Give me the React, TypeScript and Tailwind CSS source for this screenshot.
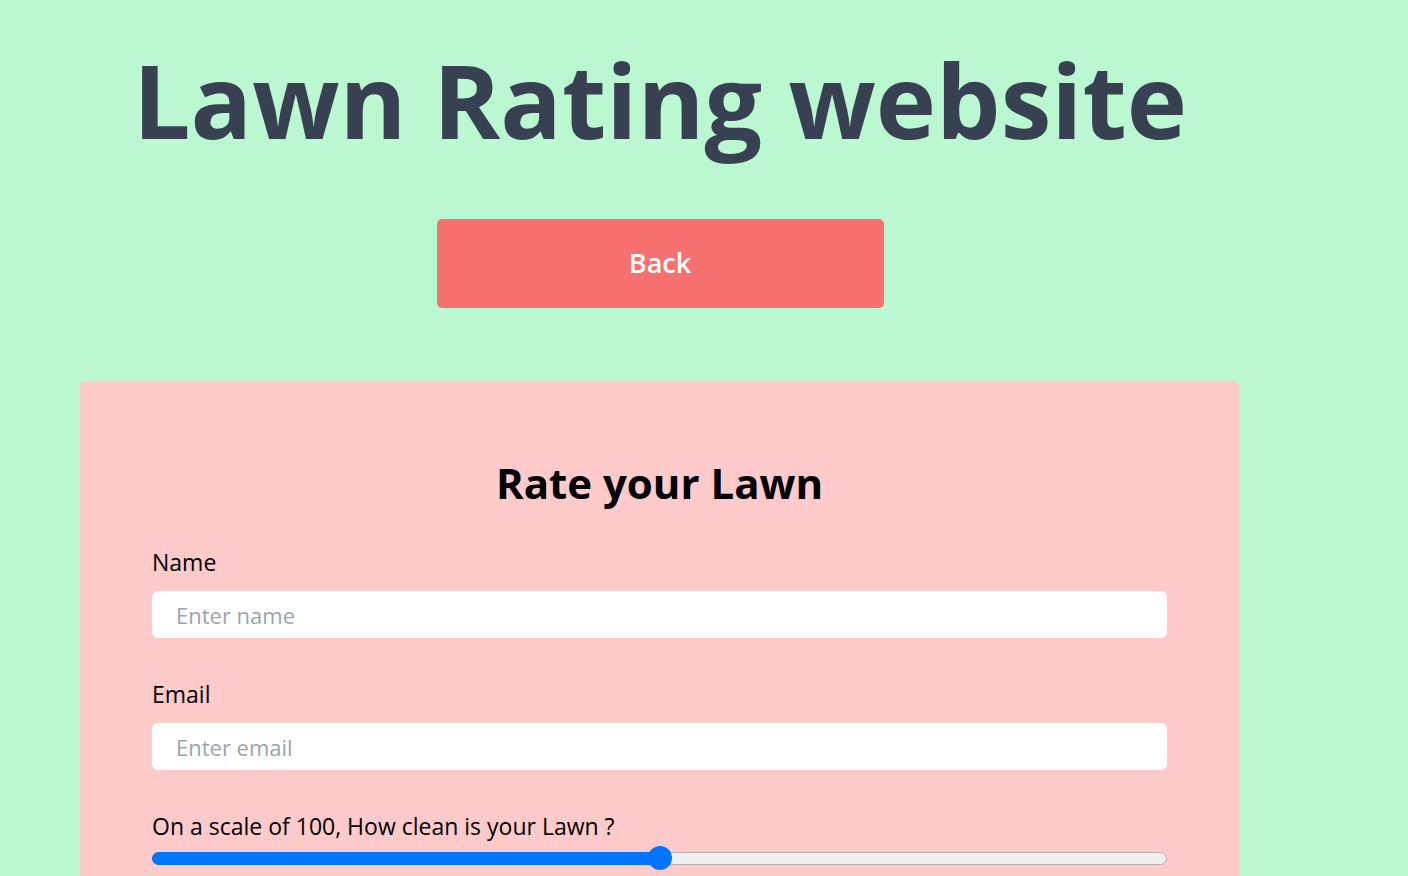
import { useState } from "react";

const font = { fontFamily: "'Open Sans', 'Noto Sans', sans-serif" };

function Field({ label, placeholder, type }: { label: string; placeholder: string; type: string }) {
  return (
    <div className="flex flex-col">
      <label className="text-[23px] leading-[36px] text-black">{label}</label>
      <input
        type={type}
        placeholder={placeholder}
        className="mt-[11px] h-[47px] w-full rounded-[6px] bg-white px-[24px] text-[22px] text-[#374151] outline-none placeholder:text-[#9ca3af]"
      />
    </div>
  );
}

export default function App() {
  const [score, setScore] = useState(50);

  return (
    <div className="min-h-screen w-full overflow-hidden bg-[#bbf7d0]" style={font}>
      <div className="flex w-[1320px] flex-col items-center">
        <h1 className="mt-[40px] text-[102px] font-bold leading-[120px] text-[#374151]">
          Lawn Rating website
        </h1>

        <button className="mt-[59px] h-[89px] w-[447px] rounded-[5px] bg-[#f87171] text-[27px] font-semibold text-white">
          Back
        </button>

        <div className="mt-[73px] ml-[80px] w-[1159px] self-start rounded-[5px] bg-[#fecaca] px-[72px] pt-[72px] pb-[60px]">
          <h2 className="text-center text-[42px] font-bold leading-[60px] text-black">Rate your Lawn</h2>

          <div className="mt-[31px] flex flex-col gap-[38px]">
            <Field label="Name" placeholder="Enter name" type="text" />
            <Field label="Email" placeholder="Enter email" type="email" />

            <div className="flex flex-col">
              <label className="text-[23px] leading-[36px] text-black">
                On a scale of 100, How clean is your Lawn ?
              </label>
              <div
                className="relative mt-[2px] h-[24px] w-full cursor-pointer"
                onClick={(e) => {
                  const r = e.currentTarget.getBoundingClientRect();
                  setScore(Math.round(((e.clientX - r.left) / r.width) * 100));
                }}
              >
                <div className="absolute left-0 right-0 top-[6px] h-[13px] rounded-full border border-[#b9b0b0] bg-[#efefef]" />
                <div
                  className="absolute left-0 top-[6px] h-[13px] rounded-full bg-[#0075ff]"
                  style={{ width: `${score}%` }}
                />
                <div
                  className="absolute top-0 h-[24px] w-[24px] -translate-x-1/2 rounded-full bg-[#0075ff]"
                  style={{ left: `${score}%` }}
                />
              </div>
            </div>
          </div>
        </div>
      </div>
    </div>
  );
}
